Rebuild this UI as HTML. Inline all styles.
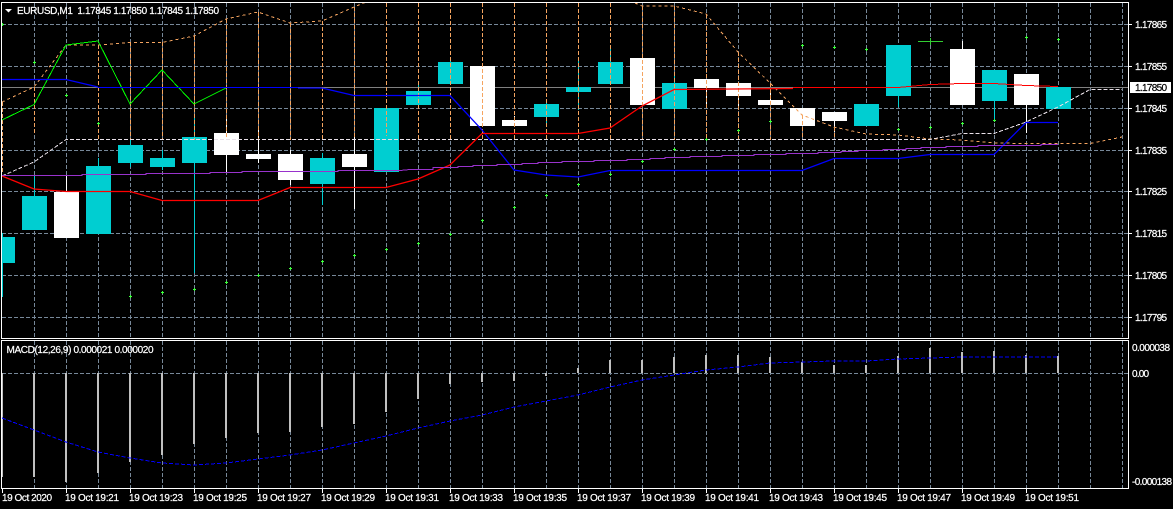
<!DOCTYPE html>
<html>
<head>
<meta charset="utf-8">
<style>
html,body{margin:0;padding:0;background:#000;width:1173px;height:509px;overflow:hidden}
svg{display:block}
text{font-family:"Liberation Sans",sans-serif;font-size:10px;fill:#fff;stroke:#fff;stroke-width:.22px}
</style>
</head>
<body>
<svg width="1173" height="509" viewBox="0 0 1173 509" xmlns="http://www.w3.org/2000/svg">
<rect width="1173" height="509" fill="#000"/>

<!-- grid -->
<g shape-rendering="crispEdges" fill="none" stroke="#778899" stroke-width="1" stroke-dasharray="4 2">
<path d="M2 24.5H1128M2 66.5H1128M2 108.5H1128M2 150.5H1128M2 191.5H1128M2 233.5H1128M2 275.5H1128M2 317.5H1128M2 373.5H1128"/>
<path d="M34.5 3V338M66.5 3V338M98.5 3V338M130.5 3V338M162.5 3V338M194.5 3V338M226.5 3V338M258.5 3V338M290.5 3V338M322.5 3V338M354.5 3V338M386.5 3V338M418.5 3V338M450.5 3V338M482.5 3V338M514.5 3V338M546.5 3V338M578.5 3V338M610.5 3V338M642.5 3V338M674.5 3V338M706.5 3V338M738.5 3V338M770.5 3V338M802.5 3V338M834.5 3V338M866.5 3V338M898.5 3V338M930.5 3V338M962.5 3V338M994.5 3V338M1026.5 3V338M1058.5 3V338M1090.5 3V338M1122.5 3V338"/>
<path d="M34.5 341V488M66.5 341V488M98.5 341V488M130.5 341V488M162.5 341V488M194.5 341V488M226.5 341V488M258.5 341V488M290.5 341V488M322.5 341V488M354.5 341V488M386.5 341V488M418.5 341V488M450.5 341V488M482.5 341V488M514.5 341V488M546.5 341V488M578.5 341V488M610.5 341V488M642.5 341V488M674.5 341V488M706.5 341V488M738.5 341V488M770.5 341V488M802.5 341V488M834.5 341V488M866.5 341V488M898.5 341V488M930.5 341V488M962.5 341V488M994.5 341V488M1026.5 341V488M1058.5 341V488M1090.5 341V488M1122.5 341V488"/>
</g>

<!-- bid line -->
<path d="M2 87.5H1128" stroke="#808080" stroke-width="1" shape-rendering="crispEdges"/>

<!-- cyan wicks + bodies -->
<g fill="#00CED1" shape-rendering="crispEdges">
<rect x="2" y="233" width="1" height="64"/><rect x="2" y="237" width="13" height="26"/>
<rect x="34" y="176" width="1" height="20"/><rect x="22" y="196" width="25" height="34"/>
<rect x="98" y="158" width="1" height="76"/><rect x="86" y="166" width="25" height="68"/>
<rect x="130" y="139" width="1" height="28"/><rect x="118" y="145" width="25" height="18"/>
<rect x="162" y="150" width="1" height="20"/><rect x="150" y="158" width="25" height="9"/>
<rect x="194" y="117" width="1" height="156"/><rect x="182" y="137" width="25" height="26"/>
<rect x="322" y="153" width="1" height="52"/><rect x="310" y="158" width="25" height="26"/>
<rect x="374" y="108" width="25" height="64"/>
<rect x="418" y="85" width="1" height="20"/><rect x="406" y="91" width="25" height="14"/>
<rect x="450" y="58" width="1" height="26"/><rect x="438" y="62" width="25" height="22"/>
<rect x="546" y="100" width="1" height="26"/><rect x="534" y="104" width="25" height="13"/>
<rect x="578" y="60" width="1" height="50"/><rect x="566" y="87" width="25" height="5"/>
<rect x="610" y="45" width="1" height="39"/><rect x="598" y="62" width="25" height="22"/>
<rect x="674" y="72" width="1" height="37"/><rect x="662" y="83" width="25" height="26"/>
<rect x="854" y="104" width="25" height="22"/>
<rect x="898" y="45" width="1" height="62"/><rect x="886" y="45" width="25" height="51"/>
<rect x="994" y="70" width="1" height="50"/><rect x="982" y="70" width="25" height="31"/>
<rect x="1046" y="87" width="25" height="22"/>
</g>

<!-- white wicks + bodies -->
<g fill="#fff" shape-rendering="crispEdges">
<rect x="66" y="176" width="1" height="62"/><rect x="54" y="192" width="25" height="46"/>
<rect x="226" y="115" width="1" height="57"/><rect x="214" y="133" width="25" height="22"/>
<rect x="258" y="130" width="1" height="33"/><rect x="246" y="154" width="25" height="5"/>
<rect x="290" y="150" width="1" height="35"/><rect x="278" y="154" width="25" height="26"/>
<rect x="354" y="135" width="1" height="74"/><rect x="342" y="154" width="25" height="13"/>
<rect x="470" y="66" width="25" height="60"/>
<rect x="514" y="116" width="1" height="10"/><rect x="502" y="120" width="25" height="6"/>
<rect x="630" y="58" width="25" height="47"/>
<rect x="706" y="79" width="1" height="29"/><rect x="694" y="79" width="25" height="9"/>
<rect x="738" y="83" width="1" height="25"/><rect x="726" y="83" width="25" height="13"/>
<rect x="770" y="90" width="1" height="15"/><rect x="758" y="100" width="25" height="5"/>
<rect x="790" y="108" width="25" height="18"/>
<rect x="834" y="112" width="1" height="20"/><rect x="822" y="112" width="25" height="9"/>
<rect x="962" y="41" width="1" height="64"/><rect x="950" y="49" width="25" height="56"/>
<rect x="1026" y="74" width="1" height="59"/><rect x="1014" y="74" width="25" height="31"/>
</g>

<!-- doji -->
<path d="M918 41.5H943M930.5 38V45" stroke="#32CD32" stroke-width="1" shape-rendering="crispEdges" fill="none"/>

<!-- orange verticals -->
<path fill="none" stroke="#F4A460" stroke-width="1" stroke-dasharray="4 2" shape-rendering="crispEdges" d="M2.5 102V172M34.5 87V133M98.5 45V140M130.5 42V140M162.5 42V140M194.5 36V140M226.5 19V140M258.5 12V140M290.5 23V140M322.5 21V140M354.5 7V140M386.5 3V136M418.5 3V140M450.5 3V140M482.5 3V140M514.5 3V140M546.5 3V140M578.5 3V140M610.5 3V140M642.5 6V140M674.5 6V140M706.5 14V140M738.5 52V140M770.5 83V140M802.5 115V140M834.5 127V140"/>

<!-- orange band -->
<g fill="none" stroke="#F4A460" stroke-width="1" stroke-dasharray="3 3" shape-rendering="crispEdges">
<polyline points="2,102 34,87 66,45 98,45 130,42.5 162,42.5 194,36 226,19 258,12 290,23 322,21 354,7 366,2"/>
<polyline points="635,3 642,6 674,6 706,14 738,52 770,83 802,115 834,127 866,134 898,135 930,139 962,140 994,143 1026,143.5 1058,143.5 1090,143.5 1122,137"/>
</g>

<!-- light dashed band -->
<polyline fill="none" stroke="#E8E0E8" stroke-width="1" stroke-dasharray="4 2" shape-rendering="crispEdges" points="2,176 34,162 66,139.5 930,139.5 962,133.5 994,133.5 1026,122 1058,107 1090,89.5 1122,89.5"/>

<!-- green line -->
<polyline fill="none" stroke="#00FF00" stroke-width="1" shape-rendering="crispEdges" points="2,120 34,104.5 66,45 98,41 130,104 162,70 194,104 226,88"/>

<!-- blue line -->
<g fill="none" stroke="#0000FF">
<polyline stroke-width="1.3" points="2,79.5 66,79.5 98,87"/>
<path stroke-width="1" shape-rendering="crispEdges" d="M98 87.5H298"/>
<polyline stroke-width="1.3" points="298,88 322,88 354,95.5 450,95.5 482,130 514,170 546,175 578,177 610,170.5 802,170.5 834,158.5 898,158.5 930,154.5 994,154.5 1026,122.5 1058,122.5"/>
</g>

<!-- red line -->
<g fill="none" stroke="#FF0000">
<polyline stroke-width="1.3" points="2,176 34,189 66,191.5 130,191.5 162,200.5 258,200.5 290,187.5 386,187.5 418,179 450,165 482,133.5 578,133.5 610,128 642,106 674,89.5 793,88.5"/>
<polyline stroke-width="1" shape-rendering="crispEdges" points="793,87.5 898,87.5 930,84.5 962,83.5 994,83.5 1026,85.5 1058,86.5"/>
</g>

<!-- purple line -->
<polyline fill="none" stroke="#9932CC" stroke-width="1" shape-rendering="crispEdges" points="2,175.5 82,175.5 82,174.5 146,174.5 146,173.5 210,173.5 210,172.5 242,172.5 242,171.5 338,171.5 338,170.5 400,170.5 410,169.5 433,169.5 433,167.5 458,167.5 458,166.5 473,166.5 473,165.5 497,165.5 497,164.5 522,164.5 522,163.5 538,163.5 538,162.5 562,162.5 562,161.5 594,161.5 594,160.5 627,160.5 627,159.5 650,159.5 650,158.5 665,158.5 665,157.5 690,157.5 690,156.5 722,156.5 722,155.5 754,155.5 754,154.5 786,154.5 786,153.5 818,153.5 818,152.5 841,152.5 841,151.5 858,151.5 858,150.5 883,150.5 883,149.5 906,149.5 906,148.5 921,148.5 921,147.5 946,147.5 946,146.5 978,146.5 978,145.5 1041,145.5 1041,144.5 1058,144.5"/>

<!-- green plus markers -->
<g fill="none" stroke="#3CFF3C" stroke-width="1" shape-rendering="crispEdges">
<path d="M1 24.5h3M2.5 23v3M33 62.5h3M34.5 61v3M65 95.5h3M66.5 94v3M97 123.5h3M98.5 122v3M129 296.5h3M130.5 295v3M161 292.5h3M162.5 291v3M193 289.5h3M194.5 288v3M225 282.5h3M226.5 281v3M257 275.5h3M258.5 274v3M289 268.5h3M290.5 267v3M321 261.5h3M322.5 260v3M353 255.5h3M354.5 254v3M385 249.5h3M386.5 248v3M417 243.5h3M418.5 242v3M449 234.5h3M450.5 233v3M481 220.5h3M482.5 219v3M513 207.5h3M514.5 206v3M545 195.5h3M546.5 194v3M577 184.5h3M578.5 183v3M609 174.5h3M610.5 173v3M641 161.5h3M642.5 160v3M673 149.5h3M674.5 148v3M705 139.5h3M706.5 138v3M737 130.5h3M738.5 129v3M769 121.5h3M770.5 120v3M801 45.5h3M802.5 44v3M833 47.5h3M834.5 46v3M865 49.5h3M866.5 48v3M897 129.5h3M898.5 128v3M929 127.5h3M930.5 126v3M961 123.5h3M962.5 122v3M993 120.5h3M994.5 119v3M1025 37.5h3M1026.5 36v3M1057 39.5h3M1058.5 38v3"/>
</g>

<!-- MACD histogram -->
<path fill="none" stroke="#C0C0C0" stroke-width="2" shape-rendering="crispEdges" d="M2 373V477M34 373V477M66 373V482M98 373V473M130 373V462M162 373V455M194 373V444M226 373V438M258 373V433M290 373V432M322 373V427M354 373V424M386 373V412M418 373V399M450 373V384M482 373V382M514 373V381M546 373V376M578 373V368M610 373V360M642 373V360M674 373V357M706 373V355M738 373V355M770 373V357M802 373V362M834 373V365M866 373V365M898 373V356M930 373V348M962 373V352M994 373V351M1026 373V355M1058 373V356"/>

<!-- MACD signal -->
<polyline fill="none" stroke="#0000FF" stroke-width="1" stroke-dasharray="4 2" shape-rendering="crispEdges" points="2,418 34,430 66,442 98,452 130,458 162,463 194,465 226,463 258,459 290,455 322,450 354,443 386,436 418,428 450,421 482,415 514,407 546,401 578,395 610,387 642,380 674,375 706,370 738,367 770,363 802,362 834,361 866,361 898,359 930,358 962,357 994,357 1026,357 1058,357"/>

<!-- frames -->
<g fill="none" stroke="#fff" stroke-width="1" shape-rendering="crispEdges">
<rect x="1.5" y="2.5" width="1127" height="336"/>
<rect x="1.5" y="340.5" width="1127" height="148"/>
<path d="M1129 24.5h3M1129 66.5h3M1129 108.5h3M1129 150.5h3M1129 191.5h3M1129 233.5h3M1129 275.5h3M1129 317.5h3"/>
<path d="M2.5 488v5M66.5 488v5M130.5 488v5M194.5 488v5M258.5 488v5M322.5 488v5M386.5 488v5M450.5 488v5M514.5 488v5M578.5 488v5M642.5 488v5M706.5 488v5M770.5 488v5M834.5 488v5M898.5 488v5M962.5 488v5M1026.5 488v5"/>
</g>

<!-- header -->
<polygon points="5,9 12,9 8.5,12.5" fill="#fff"/>
<text x="17" y="14" textLength="202" lengthAdjust="spacing" xml:space="preserve">EURUSD,M1  1.17845 1.17850 1.17845 1.17850</text>
<text x="6.5" y="353" textLength="147" lengthAdjust="spacing">MACD(12,26,9) 0.000021 0.000020</text>

<!-- price axis -->
<g>
<text x="1135" y="28" textLength="32" lengthAdjust="spacing">1.17865</text>
<text x="1135" y="70" textLength="32" lengthAdjust="spacing">1.17855</text>
<text x="1135" y="112" textLength="32" lengthAdjust="spacing">1.17845</text>
<text x="1135" y="154" textLength="32" lengthAdjust="spacing">1.17835</text>
<text x="1135" y="195" textLength="32" lengthAdjust="spacing">1.17825</text>
<text x="1135" y="237" textLength="32" lengthAdjust="spacing">1.17815</text>
<text x="1135" y="279" textLength="32" lengthAdjust="spacing">1.17805</text>
<text x="1135" y="321" textLength="32" lengthAdjust="spacing">1.17795</text>
</g>
<rect x="1130" y="82" width="41" height="11" fill="#fff" shape-rendering="crispEdges"/>
<text x="1135" y="91" textLength="32" lengthAdjust="spacing" style="fill:#000;stroke:#000">1.17850</text>

<text x="1132" y="351" textLength="38" lengthAdjust="spacing">0.000038</text>
<text x="1132" y="377" textLength="17" lengthAdjust="spacing">0.00</text>
<text x="1132" y="485" textLength="40" lengthAdjust="spacing">-0.000138</text>

<!-- time axis -->
<g>
<text x="2" y="501" textLength="50" lengthAdjust="spacing">19 Oct 2020</text>
<text x="65" y="501" textLength="54" lengthAdjust="spacing">19 Oct 19:21</text>
<text x="129" y="501" textLength="54" lengthAdjust="spacing">19 Oct 19:23</text>
<text x="193" y="501" textLength="54" lengthAdjust="spacing">19 Oct 19:25</text>
<text x="257" y="501" textLength="54" lengthAdjust="spacing">19 Oct 19:27</text>
<text x="321" y="501" textLength="54" lengthAdjust="spacing">19 Oct 19:29</text>
<text x="385" y="501" textLength="54" lengthAdjust="spacing">19 Oct 19:31</text>
<text x="449" y="501" textLength="54" lengthAdjust="spacing">19 Oct 19:33</text>
<text x="513" y="501" textLength="54" lengthAdjust="spacing">19 Oct 19:35</text>
<text x="577" y="501" textLength="54" lengthAdjust="spacing">19 Oct 19:37</text>
<text x="641" y="501" textLength="54" lengthAdjust="spacing">19 Oct 19:39</text>
<text x="705" y="501" textLength="54" lengthAdjust="spacing">19 Oct 19:41</text>
<text x="769" y="501" textLength="54" lengthAdjust="spacing">19 Oct 19:43</text>
<text x="833" y="501" textLength="54" lengthAdjust="spacing">19 Oct 19:45</text>
<text x="897" y="501" textLength="54" lengthAdjust="spacing">19 Oct 19:47</text>
<text x="961" y="501" textLength="54" lengthAdjust="spacing">19 Oct 19:49</text>
<text x="1025" y="501" textLength="54" lengthAdjust="spacing">19 Oct 19:51</text>
</g>
</svg>
</body>
</html>
